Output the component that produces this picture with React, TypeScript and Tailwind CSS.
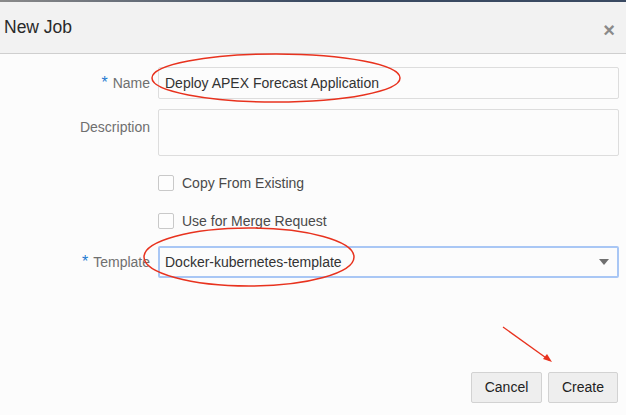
import React from "react";

const labelCls = "w-[150px] shrink-0 text-right text-[14px] text-[#6f6f6f]";
const fieldCls = "flex-1 rounded-[2px] border border-[#dddddd] bg-[#fcfcfc] px-[6px] text-[14px] text-[#333333]";

function Req() {
  return <span className="mr-[5px] text-[16px] text-[#1f7ad1]">*</span>;
}

function Check({ label }: { label: string }) {
  return (
    <div className="flex h-[20px] items-center pl-[158px]">
      <span className="h-[16px] w-[16px] rounded-[2px] border border-[#c9c9c9] bg-[#fdfdfd]" />
      <span className="ml-[8px] text-[14px] text-[#4a4a4a]">{label}</span>
    </div>
  );
}

export default function App() {
  return (
    <div className="relative h-[415px] w-[626px] overflow-hidden bg-[#fcfcfc] font-['Liberation_Sans',Arial,sans-serif]">
      {/* strip of the page behind */}
      <div className="h-[2px] bg-gradient-to-r from-[#8a8a8a] via-[#3a4a62] to-[#3a4a62]" />

      {/* Header */}
      <div className="flex h-[52px] items-center justify-between border-b border-[#cfcfcf] bg-[#f2f2f2] pl-[4px] pr-[11px]">
        <h1 className="text-[17.5px] text-[#2a2a2a]">New Job</h1>
        <span className="mt-[4px] text-[20px] font-bold leading-none text-[#8a8a8a]">×</span>
      </div>

      {/* Form */}
      <div className="flex flex-col pr-[7px] pt-[13px]">
        <div className="flex items-center gap-[8px]">
          <label className={labelCls}>
            <Req />
            Name
          </label>
          <div className={`${fieldCls} flex h-[32px] items-center`}>Deploy APEX Forecast Application</div>
        </div>

        <div className="mt-[10px] flex items-start gap-[8px]">
          <label className={`${labelCls} pt-[8px]`}>Description</label>
          <div className={`${fieldCls} h-[47px]`} />
        </div>

        <div className="mt-[17px] flex flex-col gap-[18px]">
          <Check label="Copy From Existing" />
          <Check label="Use for Merge Request" />
        </div>

        <div className="mt-[15px] flex items-center gap-[8px]">
          <label className={labelCls}>
            <Req />
            Template
          </label>
          <div className="flex h-[32px] flex-1 items-center justify-between rounded-[2px] border-2 border-[#a9c7f5] bg-[#fcfcfc] pl-[5px] pr-[8px] text-[14px] text-[#333333]">
            Docker-kubernetes-template
            <svg width="10" height="6" viewBox="0 0 10 6">
              <path d="M0 0h10L5 6z" fill="#707070" />
            </svg>
          </div>
        </div>
      </div>

      {/* Footer buttons */}
      <div className="absolute bottom-[12px] right-[8px] flex gap-[6px]">
        <button className="h-[31px] w-[71px] rounded-[2px] border border-[#d2d2d2] bg-[#eeeeee] text-[14px] text-[#222222]">
          Cancel
        </button>
        <button className="h-[31px] w-[70px] rounded-[2px] border border-[#d2d2d2] bg-[#eeeeee] text-[14px] text-[#222222]">
          Create
        </button>
      </div>

      {/* Red annotations drawn over the screenshot */}
      <svg className="pointer-events-none absolute inset-0" width="626" height="415">
        <ellipse cx="276" cy="78" rx="124" ry="24" fill="none" stroke="#e8321e" strokeWidth="1.5" />
        <ellipse cx="249" cy="257" rx="105" ry="29" fill="none" stroke="#e8321e" strokeWidth="1.5" />
        <line x1="503" y1="327" x2="549" y2="360" stroke="#e8321e" strokeWidth="1.3" />
        <path d="M552 362 L543 359 L547 354 Z" fill="#e8321e" />
      </svg>
    </div>
  );
}
